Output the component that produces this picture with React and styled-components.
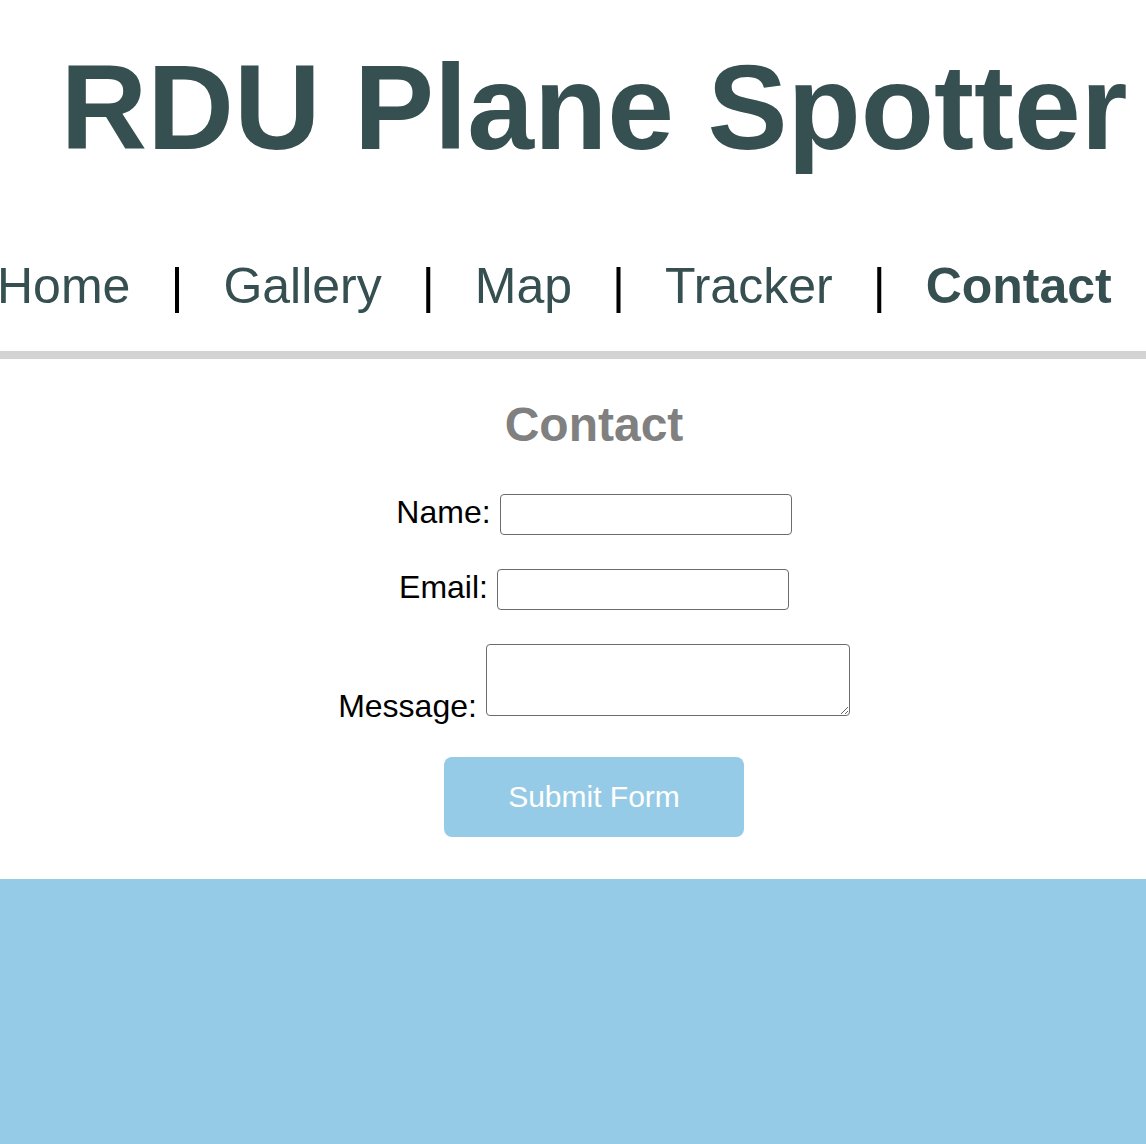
import React from "react";
import styled, { createGlobalStyle } from "styled-components";

const GlobalStyle = createGlobalStyle`
  html, body {
    margin: 0;
    padding: 0;
    background: #ffffff;
    overflow-x: hidden;
  }
  body {
    font-family: "Liberation Sans", Arial, Helvetica, sans-serif;
  }
`;

const Page = styled.div`
  width: 1146px;
  display: flex;
  flex-direction: column;
`;

const Header = styled.header`
  border-bottom: 8px solid #d3d3d3;
  padding-bottom: 40px;
`;

const Title = styled.h1`
  margin: 47px 0 0 0;
  width: 1188px;
  text-align: center;
  font-size: 120px;
  line-height: 120px;
  font-weight: bold;
  color: #364f51;
  white-space: nowrap;
`;

const Nav = styled.nav`
  display: flex;
  align-items: center;
  gap: 40px;
  margin: 94px 0 0 -3px;
  font-size: 50px;
  line-height: 50px;
  white-space: nowrap;
`;

const NavLink = styled.a`
  color: #364f51;
  text-decoration: none;
  font-weight: ${(p) => (p.$active ? "bold" : "normal")};
`;

const Divider = styled.span`
  color: #000000;
`;

const Main = styled.main`
  width: 1188px;
  display: flex;
  flex-direction: column;
  align-items: center;
  padding: 42px 0 42px;
`;

const Heading = styled.h2`
  margin: 0;
  font-size: 48px;
  line-height: 48px;
  font-weight: bold;
  color: #808080;
`;

const Form = styled.form`
  display: flex;
  flex-direction: column;
  align-items: center;
  margin-top: 45px;
`;

const Row = styled.div`
  display: flex;
  align-items: ${(p) => (p.$bottom ? "flex-end" : "center")};
  gap: 9px;
  margin-bottom: ${(p) => p.$space}px;
`;

const Label = styled.label`
  font-size: 32px;
  line-height: 32px;
  color: #000000;
  margin-bottom: ${(p) => (p.$bottom ? "-6px" : "0")};
  padding-bottom: ${(p) => (p.$bottom ? "0" : "5px")};
`;

const Input = styled.input`
  box-sizing: border-box;
  width: 292px;
  height: 41px;
  margin: 0;
  border: 1px solid #6b6b6b;
  border-radius: 4px;
  background: #ffffff;
  font-size: 26px;
`;

const TextArea = styled.textarea`
  box-sizing: border-box;
  width: 364px;
  height: 72px;
  margin: 0;
  border: 1px solid #6b6b6b;
  border-radius: 4px;
  background: #ffffff;
  font-size: 26px;
  display: block;
`;

const SubmitButton = styled.button`
  width: 300px;
  height: 80px;
  border: none;
  border-radius: 8px;
  background: #96cbe7;
  color: #ffffff;
  font-family: "Liberation Sans", Arial, Helvetica, sans-serif;
  font-size: 30px;
  cursor: pointer;
`;

const Footer = styled.footer`
  height: 280px;
  background: #96cbe7;
`;

const links = ["Home", "Gallery", "Map", "Tracker", "Contact"];

const App = () => {
  return (
    <Page>
      <GlobalStyle />
      <Header>
        <Title>RDU Plane Spotter</Title>
        <Nav>
          {links.map((link, i) => (
            <React.Fragment key={link}>
              {i > 0 && <Divider>|</Divider>}
              <NavLink href="#" $active={link === "Contact"}>
                {link}
              </NavLink>
            </React.Fragment>
          ))}
        </Nav>
      </Header>
      <Main>
        <Heading>Contact</Heading>
        <Form onSubmit={(e) => e.preventDefault()}>
          <Row $space={34}>
            <Label htmlFor="name">Name:</Label>
            <Input id="name" type="text" />
          </Row>
          <Row $space={34}>
            <Label htmlFor="email">Email:</Label>
            <Input id="email" type="email" />
          </Row>
          <Row $space={41} $bottom>
            <Label htmlFor="message" $bottom>
              Message:
            </Label>
            <TextArea id="message" />
          </Row>
          <SubmitButton type="submit">Submit Form</SubmitButton>
        </Form>
      </Main>
      <Footer />
    </Page>
  );
};

export default App;
